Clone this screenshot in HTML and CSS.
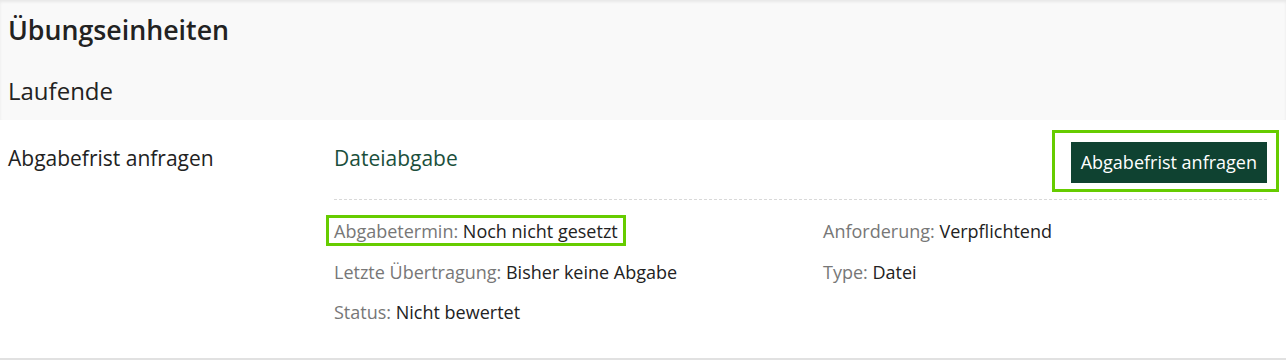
FILE: index.html
```html
<!DOCTYPE html>
<html lang="de">
<head>
<meta charset="utf-8">
<title>Übungseinheiten</title>
<link rel="stylesheet" href="styles.css">
</head>
<body>
<div class="page">
  <header class="section-head">
    <h2 class="title">Übungseinheiten</h2>
    <h3 class="subtitle">Laufende</h3>
  </header>
  <div class="row">
    <div class="row-label">Abgabefrist anfragen</div>
    <div class="row-content">
      <div class="item-head">
        <a class="item-title" href="#">Dateiabgabe</a>
        <div class="btn-wrap">
          <button class="btn" type="button">Abgabefrist anfragen</button>
        </div>
      </div>
      <div class="meta">
        <div class="meta-item highlight"><span class="k">Abgabetermin:</span> <span class="v">Noch nicht gesetzt</span></div>
        <div class="meta-item"><span class="k">Anforderung:</span> <span class="v">Verpflichtend</span></div>
        <div class="meta-item"><span class="k">Letzte Übertragung:</span> <span class="v">Bisher keine Abgabe</span></div>
        <div class="meta-item"><span class="k">Type:</span> <span class="v">Datei</span></div>
        <div class="meta-item"><span class="k">Status:</span> <span class="v">Nicht bewertet</span></div>
      </div>
    </div>
  </div>
</div>
</body>
</html>
```

FILE: styles.css
```css
* { box-sizing: border-box; }
html, body { margin: 0; padding: 0; background: #fff; }
body {
  font-family: "Open Sans", "Noto Sans", sans-serif;
  color: #222;
  width: 1286px;
  height: 361px;
  overflow: hidden;
}
.section-head {
  background: #f9f9f9;
  height: 120px;
  padding: 14px 8px 0;
  box-shadow: inset 0 2px 3px rgba(0, 0, 0, 0.07);
}
.title {
  margin: 0;
  font-size: 26.75px;
  font-weight: 600;
  line-height: 32px;
  color: #222;
}
.subtitle {
  margin: 29px 0 0;
  font-size: 24px;
  font-weight: 400;
  line-height: 32px;
  color: #222;
}
.row {
  display: flex;
  padding: 22px 19px 0 8px;
  height: 240px;
  border-bottom: 2px solid #e1e1e1;
}
.row-label {
  width: 326px;
  flex: none;
  margin-top: 2px;
  font-size: 21px;
  line-height: 28px;
  color: #222;
}
.row-content { flex: 1; }
.item-head {
  display: flex;
  justify-content: space-between;
  align-items: flex-start;
  padding-bottom: 16px;
  border-bottom: 1px dashed #d9d9d9;
}
.item-title {
  margin-top: 2px;
  font-size: 21px;
  line-height: 28px;
  color: #1b4f3c;
  text-decoration: none;
}
.btn-wrap { position: relative; }
.btn-wrap::before {
  content: "";
  position: absolute;
  left: -19px;
  right: -12px;
  top: -12px;
  bottom: -9px;
  border: 3px solid #66cc00;
  pointer-events: none;
}
.btn {
  display: block;
  height: 41px;
  padding: 0 10px;
  border: 0;
  background: #0f4231;
  color: #fff;
  font-family: inherit;
  font-size: 18px;
  line-height: 41px;
  white-space: nowrap;
  cursor: pointer;
}
.meta {
  display: grid;
  grid-template-columns: 489px 1fr;
  row-gap: 16.5px;
  margin-top: 19px;
  font-size: 18px;
  line-height: 24px;
}
.meta-item { white-space: nowrap; }
.k { color: #777; }
.v { color: #222; }
.highlight { position: relative; justify-self: start; }
.highlight::before {
  content: "";
  position: absolute;
  left: -8px;
  right: -8px;
  top: -4px;
  bottom: -3px;
  border: 3px solid #66cc00;
  pointer-events: none;
}
```
